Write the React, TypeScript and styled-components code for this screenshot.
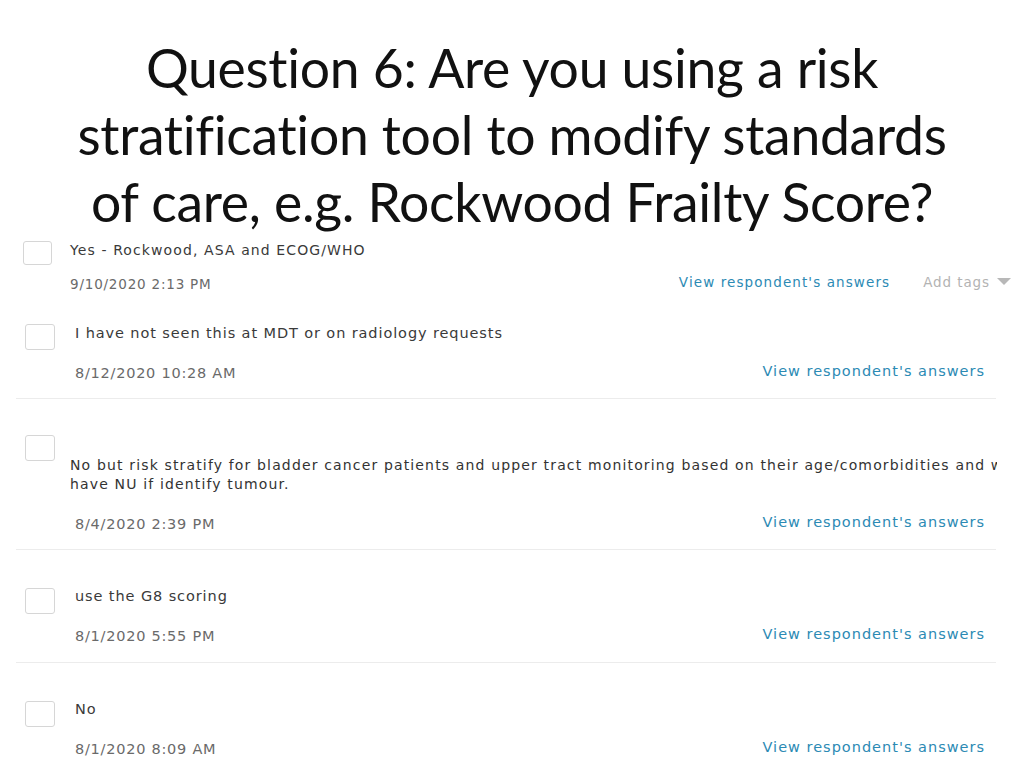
import React from 'react';
import styled, { createGlobalStyle } from 'styled-components';

const GlobalStyle = createGlobalStyle`
  html, body {
    margin: 0;
    padding: 0;
    background: #fff;
  }
  body {
    width: 1024px;
    height: 768px;
    overflow: hidden;
  }
`;

const Slide = styled.div`
  width: 1024px;
  height: 768px;
  display: flex;
  flex-direction: column;
  overflow: hidden;
`;

const Title = styled.h1`
  margin: 0;
  height: 240px;
  padding-top: 34px;
  box-sizing: border-box;
  font-family: Lato, 'Open Sans', sans-serif;
  font-weight: 400;
  font-size: 53.5px;
  line-height: 67px;
  color: #111;
  text-align: center;
  letter-spacing: -0.3px;
`;

// 응답 카드
const Response = styled.div<{ $mt: number; $pb: number; $right: number; $divided?: boolean; $left: number; $pr?: number }>`
  display: flex;
  align-items: flex-start;
  margin: ${(p) => p.$mt}px ${(p) => p.$right}px 0 16px;
  padding: 0 ${(p) => p.$pr || 0}px ${(p) => p.$pb}px ${(p) => p.$left}px;
  border-bottom: ${(p) => (p.$divided ? '1px solid #ececec' : 'none')};
`;

const Check = styled.div<{ $w: number; $h: number }>`
  flex: none;
  width: ${(p) => p.$w}px;
  height: ${(p) => p.$h}px;
  margin-top: 1px;
  box-sizing: border-box;
  border: 1px solid #d6d6d6;
  border-radius: 3px;
  background: #fff;
`;

const Body = styled.div<{ $indent: number; $top?: number }>`
  flex: 1;
  min-width: 0;
  margin-left: ${(p) => p.$indent}px;
  padding-top: ${(p) => p.$top || 0}px;
`;

const Answer = styled.div<{ $size: number; $ls: number }>`
  font-family: 'DejaVu Sans', 'Open Sans', sans-serif;
  font-size: ${(p) => p.$size}px;
  line-height: 18px;
  letter-spacing: ${(p) => p.$ls}px;
  color: #3a3a3a;
  white-space: nowrap;
`;

// 원본 스크린샷처럼 오른쪽 끝에서 잘림
const LongAnswer = styled.div`
  font-family: 'DejaVu Sans', 'Open Sans', sans-serif;
  font-size: 14px;
  line-height: 19px;
  letter-spacing: 1.15px;
  color: #333;
  margin-left: -5px;
  margin-right: -12px;
  white-space: pre;
  overflow: hidden;
`;

const Footer = styled.div<{ $gap: number }>`
  display: flex;
  align-items: center;
  margin-top: ${(p) => p.$gap}px;
  height: 18px;
`;

const Stamp = styled.span<{ $size: number; $ls: number }>`
  flex: 1;
  font-family: 'DejaVu Sans', 'Open Sans', sans-serif;
  font-size: ${(p) => p.$size}px;
  letter-spacing: ${(p) => p.$ls}px;
  color: #6a6a6a;
  position: relative;
  top: 2px;
`;

const ViewLink = styled.a<{ $size: number; $ls: number }>`
  font-family: 'DejaVu Sans', 'Open Sans', sans-serif;
  font-size: ${(p) => p.$size}px;
  letter-spacing: ${(p) => p.$ls}px;
  color: #2c8ab4;
  text-decoration: none;
`;

const Tags = styled.span`
  display: flex;
  align-items: center;
  gap: 7px;
  margin-left: 33px;
  font-family: 'DejaVu Sans', 'Open Sans', sans-serif;
  font-size: 13.5px;
  letter-spacing: 0.9px;
  color: #b3b3b3;
`;

const Caret = () => (
  <svg width="14" height="8" viewBox="0 0 14 8">
    <path d="M0 0 H14 L7 7 Z" fill="#b8b8b8" />
  </svg>
);

const App = () => {
  return (
    <Slide>
      <GlobalStyle />
      <Title>
        Question 6: Are you using a risk
        <br />
        stratification tool to modify standards
        <br />
        of care, e.g. Rockwood Frailty Score?
      </Title>

      <Response $mt={0} $pb={0} $right={13} $left={7}>
        <Check $w={29} $h={24} />
        <Body $indent={18} $top={1}>
          <Answer $size={14} $ls={1.1}>Yes - Rockwood, ASA and ECOG/WHO</Answer>
          <Footer $gap={14}>
            <Stamp $size={13.5} $ls={0.8}>9/10/2020 2:13 PM</Stamp>
            <ViewLink $size={13.5} $ls={1.1}>View respondent's answers</ViewLink>
            <Tags>
              Add tags
              <Caret />
            </Tags>
          </Footer>
        </Body>
      </Response>

      <Response $mt={32} $pb={18} $right={28} $left={9} $pr={11} $divided>
        <Check $w={30} $h={26} />
        <Body $indent={20} $top={1}>
          <Answer $size={14.5} $ls={0.9}>I have not seen this at MDT or on radiology requests</Answer>
          <Footer $gap={20}>
            <Stamp $size={14.5} $ls={0.75}>8/12/2020 10:28 AM</Stamp>
            <ViewLink $size={14.5} $ls={1}>View respondent's answers</ViewLink>
          </Footer>
        </Body>
      </Response>

      <Response $mt={35} $pb={18} $right={28} $left={9} $pr={11} $divided>
        <Check $w={30} $h={26} />
        <Body $indent={20} $top={22}>
          <LongAnswer>
            {'No but risk stratify for bladder cancer patients and upper tract monitoring based on their age/comorbidities and will\nhave NU if identify tumour.'}
          </LongAnswer>
          <Footer $gap={19}>
            <Stamp $size={14.5} $ls={0.75}>8/4/2020 2:39 PM</Stamp>
            <ViewLink $size={14.5} $ls={1}>View respondent's answers</ViewLink>
          </Footer>
        </Body>
      </Response>

      <Response $mt={37} $pb={19} $right={28} $left={9} $pr={11} $divided>
        <Check $w={30} $h={26} />
        <Body $indent={20} $top={0}>
          <Answer $size={14.5} $ls={0.9}>use the G8 scoring</Answer>
          <Footer $gap={20}>
            <Stamp $size={14.5} $ls={0.75}>8/1/2020 5:55 PM</Stamp>
            <ViewLink $size={14.5} $ls={1}>View respondent's answers</ViewLink>
          </Footer>
        </Body>
      </Response>

      <Response $mt={37} $pb={0} $right={28} $left={9} $pr={11}>
        <Check $w={30} $h={26} />
        <Body $indent={20} $top={0}>
          <Answer $size={14.5} $ls={0.9}>No</Answer>
          <Footer $gap={20}>
            <Stamp $size={14.5} $ls={0.75}>8/1/2020 8:09 AM</Stamp>
            <ViewLink $size={14.5} $ls={1}>View respondent's answers</ViewLink>
          </Footer>
        </Body>
      </Response>
    </Slide>
  );
};

export default App;
